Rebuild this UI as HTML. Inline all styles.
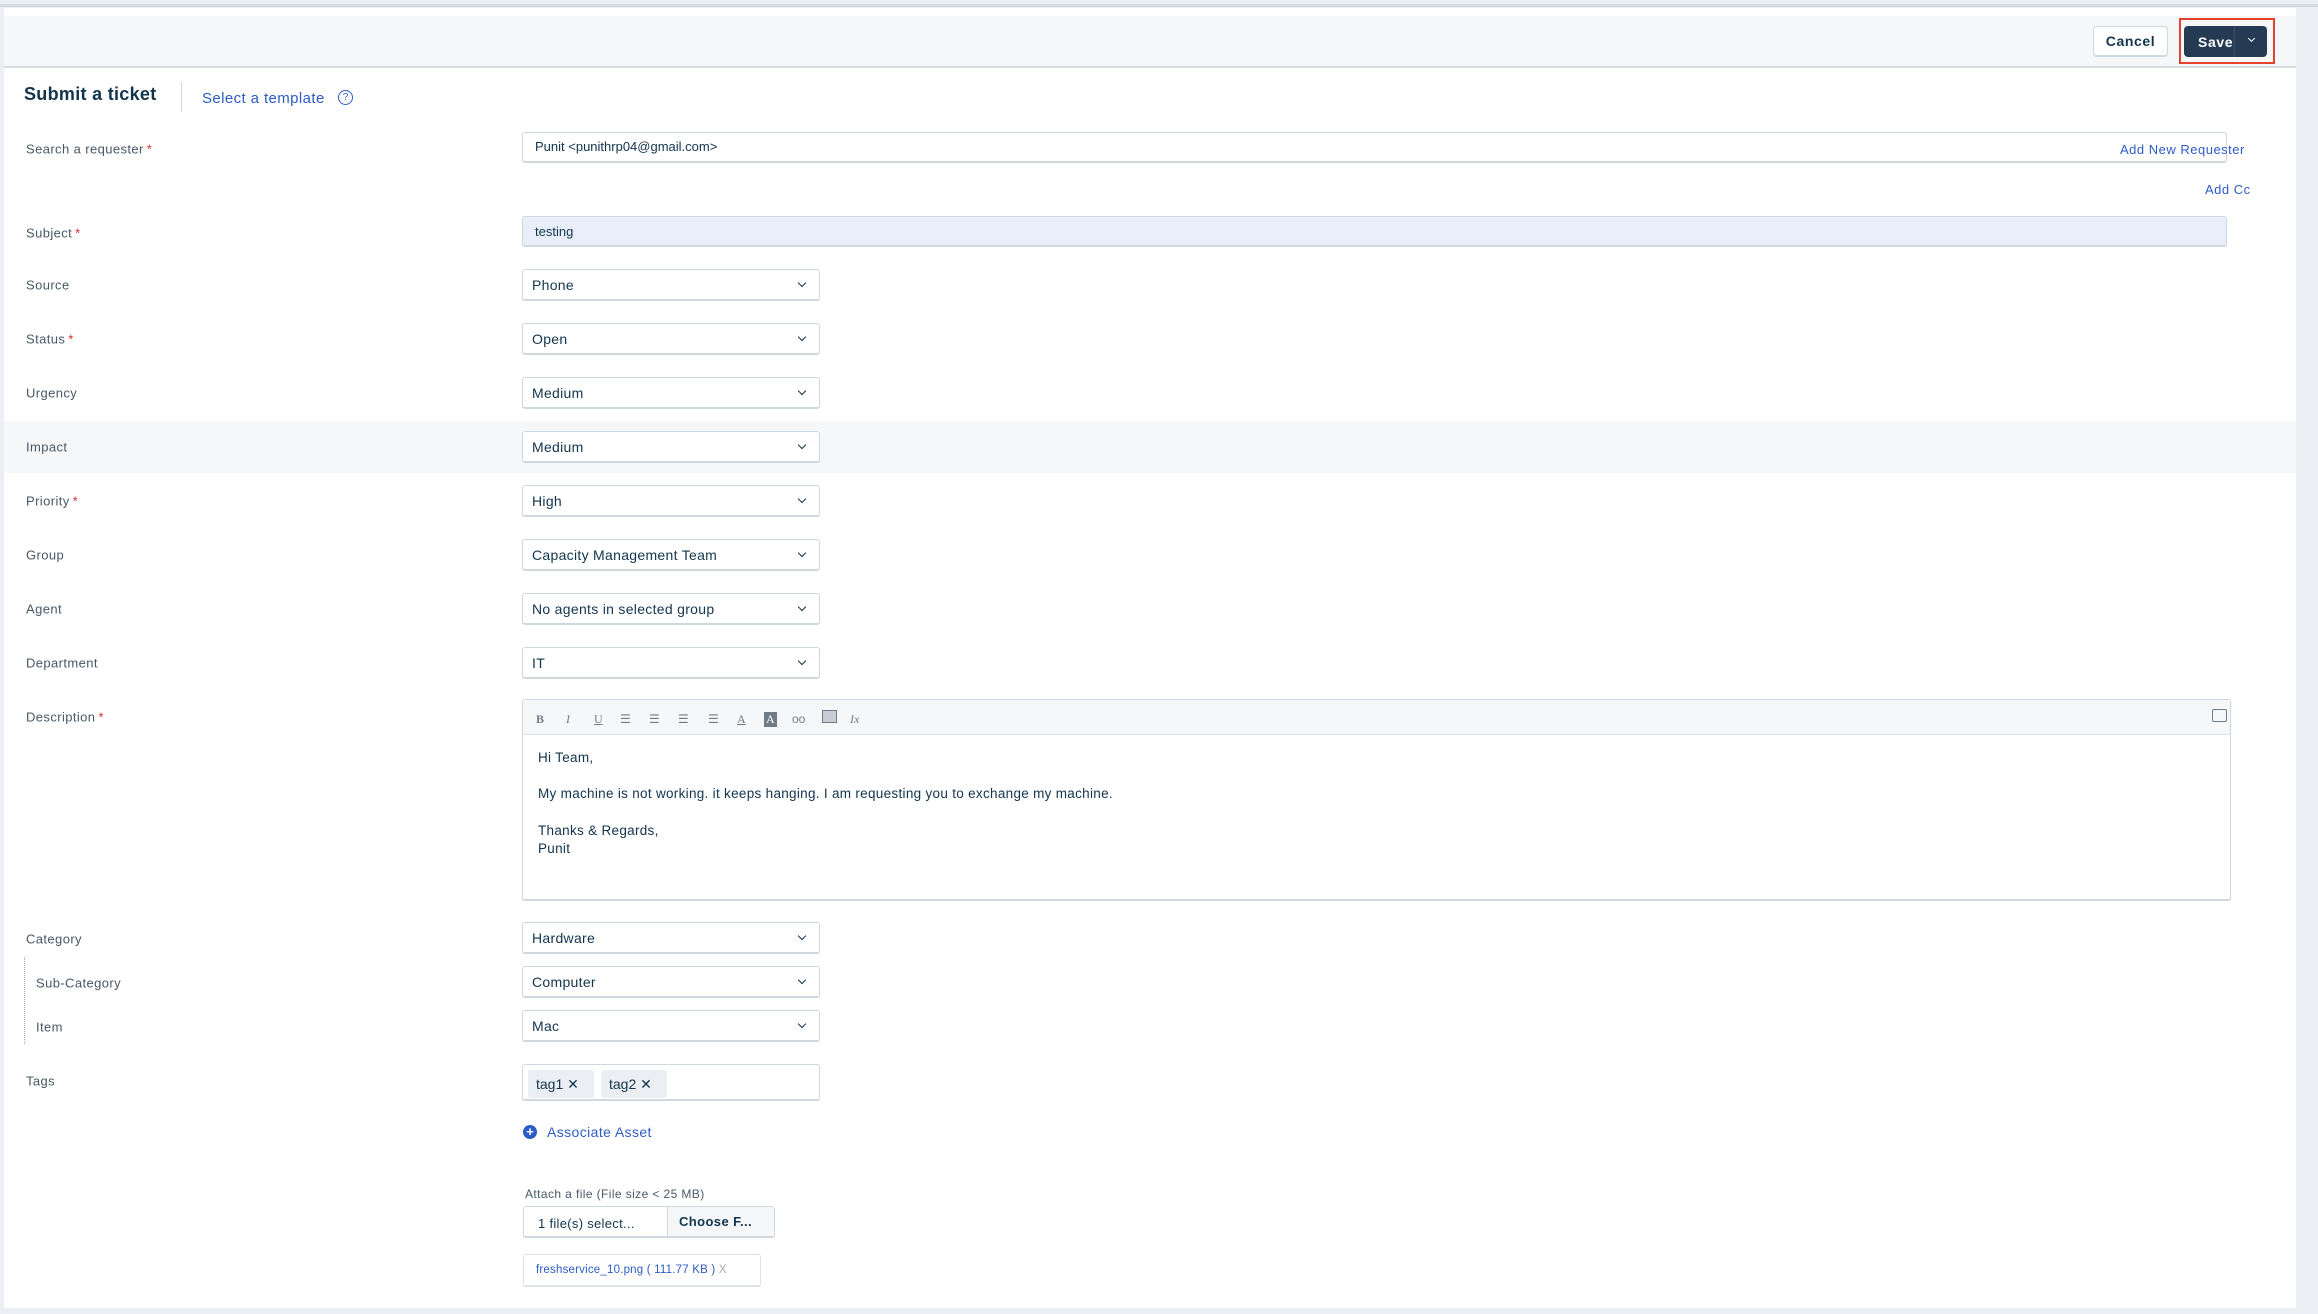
<!DOCTYPE html>
<html><head><meta charset="utf-8">
<style>
*{box-sizing:border-box;margin:0;padding:0}
body{width:2318px;height:1314px;background:#ebeef2;font-family:"Liberation Sans",sans-serif;color:#12344d;position:relative;overflow:hidden}
.abs{position:absolute}
#panel{position:absolute;left:4px;top:8px;width:2292px;height:1300px;background:#fff}
#topline{position:absolute;left:0;top:4px;width:2318px;height:3px;background:#d6dbe2}
#hdr{position:absolute;left:4px;top:16px;width:2292px;height:52px;background:#f5f7f9;border-bottom:2px solid #d6dbe2}
.btn{position:absolute;height:31px;border-radius:4px;font-size:14px;font-weight:bold;letter-spacing:.6px;display:flex;align-items:center;justify-content:center}
.lbl{position:absolute;left:26px;font-size:13px;color:#475867;letter-spacing:.4px;transform:translateY(-50%)}
.req{color:#d72d30;margin-left:3px}
.sel{position:absolute;left:522px;width:298px;height:32px;border:1px solid #cfd7df;border-bottom-width:2px;border-radius:3px;background:#fff;font-size:14px;padding-left:9px;display:flex;align-items:center;letter-spacing:.3px;color:#12344d}
.sel:after{content:"";position:absolute;right:14px;top:10px;width:5px;height:5px;border-right:1.5px solid #12344d;border-bottom:1.5px solid #12344d;transform:rotate(45deg)}
.link{color:#2c5cc5}
.tb{position:absolute;top:712px;font-size:12px;color:#6f7c87;font-family:"Liberation Serif",serif}
</style></head><body>
<div id="topline"></div>
<div id="panel"></div>
<div id="hdr"></div>
<div class="abs" style="left:2179px;top:18px;width:96px;height:46px;border:2px solid #e5412d"></div>
<div class="btn" style="left:2093px;top:26px;width:75px;background:#fff;border:1px solid #cfd7df;border-bottom-width:2px;color:#12344d">Cancel</div>
<div class="btn" style="left:2184px;top:26px;width:83px;background:#243b53;color:#fff;justify-content:flex-start;padding-left:14px">Save</div>
<div class="abs" style="left:2234px;top:26px;width:1px;height:31px;background:#3b5068"></div>
<div class="abs" style="left:2249px;top:36px;width:5px;height:5px;border-right:1.5px solid #fff;border-bottom:1.5px solid #fff;transform:rotate(45deg)"></div>

<div class="abs" style="left:24px;top:84px;font-size:18px;font-weight:bold;letter-spacing:.3px;color:#12344d">Submit a ticket</div>
<div class="abs" style="left:181px;top:82px;width:1px;height:30px;background:#cfd7df"></div>
<div class="abs link" style="left:202px;top:90px;font-size:15px;letter-spacing:.4px">Select a template</div>
<div class="abs" style="left:338px;top:90px;width:15px;height:15px;border:1.3px solid #2c5cc5;border-radius:50%;font-size:10px;color:#2c5cc5;text-align:center;line-height:13px">?</div>

<div class="lbl" style="top:149px">Search a requester<span class="req">*</span></div>
<div class="abs" style="left:522px;top:132px;width:1705px;height:31px;border:1px solid #cfd7df;border-bottom-width:2px;border-radius:3px;font-size:13px;padding:6px 12px">Punit &lt;punithrp04@gmail.com&gt;</div>
<div class="abs link" style="left:2120px;top:142px;font-size:13px;letter-spacing:.5px">Add New Requester</div>
<div class="abs link" style="left:2205px;top:182px;font-size:13px;letter-spacing:.5px">Add Cc</div>

<div class="lbl" style="top:233px">Subject<span class="req">*</span></div>
<div class="abs" style="left:522px;top:216px;width:1705px;height:31px;border:1px solid #cfd7df;border-bottom-width:2px;border-radius:3px;background:#e8effb;font-size:13px;padding:7px 12px">testing</div>

<div class="abs" style="left:4px;top:421px;width:2292px;height:52px;background:#f5f7f9"></div>

<div class="lbl" style="top:285px">Source</div><div class="sel" style="top:269px">Phone</div>
<div class="lbl" style="top:339px">Status<span class="req">*</span></div><div class="sel" style="top:323px">Open</div>
<div class="lbl" style="top:393px">Urgency</div><div class="sel" style="top:377px">Medium</div>
<div class="lbl" style="top:447px">Impact</div><div class="sel" style="top:431px">Medium</div>
<div class="lbl" style="top:501px">Priority<span class="req">*</span></div><div class="sel" style="top:485px">High</div>
<div class="lbl" style="top:555px">Group</div><div class="sel" style="top:539px">Capacity Management Team</div>
<div class="lbl" style="top:609px">Agent</div><div class="sel" style="top:593px">No agents in selected group</div>
<div class="lbl" style="top:663px">Department</div><div class="sel" style="top:647px">IT</div>

<div class="lbl" style="top:717px">Description<span class="req">*</span></div>
<div class="abs" style="left:522px;top:699px;width:1709px;height:202px;border:1px solid #cfd7df;border-bottom-width:2px;border-radius:3px"></div>
<div class="abs" style="left:523px;top:700px;width:1707px;height:35px;background:#f5f7f9;border-bottom:1px solid #dfe3e8"></div>
<div class="tb" style="left:536px;font-weight:bold">B</div>
<div class="tb" style="left:566px;font-style:italic">I</div>
<div class="tb" style="left:594px;text-decoration:underline">U</div>
<div class="tb" style="left:620px">☰</div><div class="tb" style="left:649px">☰</div>
<div class="tb" style="left:678px">☰</div><div class="tb" style="left:708px">☰</div>
<div class="tb" style="left:737px;text-decoration:underline">A</div>
<div class="tb" style="left:764px;background:#6f7c87;color:#fff;padding:0 2px">A</div>
<div class="tb" style="left:792px;font-family:'Liberation Sans'">oo</div>
<div class="abs" style="left:822px;top:710px;width:15px;height:13px;border:1.5px solid #6f7c87;background:#c8ced4"></div>
<div class="tb" style="left:850px;font-style:italic">Ix</div>
<div class="abs" style="left:2212px;top:709px;width:15px;height:13px;border:1.5px solid #6f7c87;border-radius:2px"></div>
<div class="abs" style="left:538px;top:749px;font-size:13.5px;line-height:18px;letter-spacing:.3px;color:#12344d">Hi Team,</div>
<div class="abs" style="left:538px;top:786px;font-size:13.5px;letter-spacing:.3px">My machine is not working. it keeps hanging. I am requesting you to exchange my machine.</div>
<div class="abs" style="left:538px;top:822px;font-size:13.5px;line-height:18px;letter-spacing:.3px">Thanks &amp; Regards,<br>Punit</div>

<div class="lbl" style="top:939px">Category</div><div class="sel" style="top:922px">Hardware</div>
<div class="abs" style="left:24px;top:957px;height:87px;border-left:1.5px dotted #a0a8b0"></div>
<div class="lbl" style="top:983px;left:36px">Sub-Category</div><div class="sel" style="top:966px">Computer</div>
<div class="lbl" style="top:1027px;left:36px">Item</div><div class="sel" style="top:1010px">Mac</div>

<div class="lbl" style="top:1081px">Tags</div>
<div class="abs" style="left:522px;top:1064px;width:298px;height:37px;border:1px solid #cfd7df;border-bottom-width:2px;border-radius:3px"></div>
<div class="abs" style="left:528px;top:1070px;width:66px;height:28px;background:#ebeff3;border-radius:3px;font-size:14px;padding:6px 8px">tag1 ✕</div>
<div class="abs" style="left:601px;top:1070px;width:66px;height:28px;background:#ebeff3;border-radius:3px;font-size:14px;padding:6px 8px">tag2 ✕</div>

<div class="abs" style="left:523px;top:1125px;width:14px;height:14px;border-radius:50%;background:#2c5cc5;color:#fff;font-size:13px;font-weight:bold;text-align:center;line-height:14px">+</div>
<div class="abs link" style="left:547px;top:1124px;font-size:14px;letter-spacing:.4px">Associate Asset</div>

<div class="abs" style="left:525px;top:1187px;font-size:12px;letter-spacing:.4px;color:#475867">Attach a file (File size &lt; 25 MB)</div>
<div class="abs" style="left:523px;top:1206px;width:252px;height:32px;border:1px solid #cfd7df;border-bottom-width:2px;border-radius:3px"></div>
<div class="abs" style="left:538px;top:1216px;font-size:13px;letter-spacing:.3px">1 file(s) select...</div>
<div class="abs" style="left:667px;top:1207px;width:107px;height:29px;background:#f5f7f9;border-left:1px solid #cfd7df;font-size:13px;font-weight:bold;padding:7px 11px;letter-spacing:.4px">Choose F...</div>
<div class="abs" style="left:523px;top:1254px;width:238px;height:33px;border:1px solid #dfe3e8;border-bottom-width:2px;border-radius:3px;font-size:11.5px;padding:9px 12px;color:#2c5cc5;letter-spacing:.2px">freshservice_10.png ( 111.77 KB ) <span style="color:#aab">X</span></div>
</body></html>
